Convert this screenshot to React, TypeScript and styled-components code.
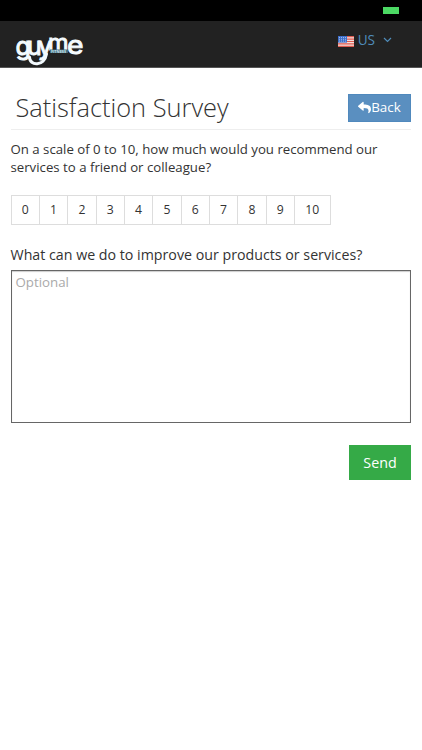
import React from 'react';
import styled, { createGlobalStyle } from 'styled-components';
import { FaReply } from 'react-icons/fa';

const GlobalStyle = createGlobalStyle`
	* {
		box-sizing: border-box;
	}
	body {
		margin: 0;
		background: #fff;
		color: #333;
		font-family: 'Open Sans', sans-serif;
	}
	button,
	textarea {
		font-family: inherit;
	}
`;

const StatusBar = styled.div`
	display: flex;
	justify-content: flex-end;
	height: 21px;
	padding: 7px 23px 0 0;
	background: #000;
`;

const Battery = styled.div`
	width: 16px;
	height: 7px;
	background: #4cd964;
`;

const Navbar = styled.header`
	display: flex;
	justify-content: space-between;
	height: 47px;
	padding: 0 30px 0 14px;
	background: #222;
	border-bottom: 1px solid #555;
`;

const LogoSvg = styled.svg`
	display: block;
	margin-top: 11px;
	overflow: visible;
`;

const LanguageMenu = styled.button`
	display: flex;
	align-items: center;
	height: 20px;
	margin-top: 9px;
	padding: 0;
	border: 0;
	background: none;
	color: #4f8cba;
	font-size: 13.6px;
	line-height: 20px;
`;

const FlagSvg = styled.svg`
	margin: 3px 4px 0 0;
`;

const ChevronSvg = styled.svg`
	margin-left: 8px;
`;

const Page = styled.main`
	padding: 26px 11px 0 10.5px;
`;

const TitleRow = styled.div`
	display: flex;
	justify-content: space-between;
	height: 36px;
	padding-left: 5px;
	border-bottom: 1px solid #eee;
`;

const Title = styled.h1`
	margin: -5px 0 0;
	font-size: 25.4px;
	font-weight: 300;
	line-height: 36px;
	white-space: nowrap;
`;

const BackButton = styled.button`
	display: flex;
	align-items: center;
	justify-content: center;
	width: 63px;
	height: 28px;
	padding: 0 0 2px;
	border: 1px solid #5089bd;
	background: #5a8fc0;
	color: #fff;
	font-size: 13.4px;
`;

const Question = styled.p`
	margin: 10px 0 0;
	font-size: 13.23px;
	line-height: 18.4px;
`;

const Scale = styled.div`
	display: flex;
	width: 320px;
	height: 30px;
	margin-top: 18.2px;
	border: 1px solid #ddd;
`;

const ScaleOption = styled.button<{ $wide?: boolean }>`
	flex: ${({ $wide }) => ($wide ? '1 0 0' : '0 0 28.35px')};
	padding: 0 0 2px;
	border: 0;
	border-right: ${({ $wide }) => ($wide ? '0' : '1px solid #ddd')};
	background: #fff;
	color: #333;
	font-size: 12.2px;
`;

const Label = styled.label`
	display: block;
	margin-top: 20px;
	font-size: 14.23px;
	line-height: 20px;
`;

const Comments = styled.textarea`
	display: block;
	width: 100%;
	height: 153px;
	margin-top: 5px;
	padding: 1px 4px;
	border: 1px solid #666;
	border-radius: 0;
	box-shadow: inset 0 1px 1px rgba(0, 0, 0, 0.2);
	font-size: 13.3px;
	line-height: 20px;
	resize: none;
	&::placeholder {
		color: #aaa;
	}
`;

const Actions = styled.div`
	display: flex;
	justify-content: flex-end;
	margin-top: 22px;
`;

const SendButton = styled.button`
	width: 62px;
	height: 35px;
	padding: 0;
	border: 0;
	background: #35aa47;
	color: #fff;
	font-size: 14.3px;
`;

const scores = Array.from({ length: 11 }, (_, i) => i);

const Logo = () => (
	<LogoSvg width='72' height='36' viewBox='14 32 72 36'>
		<g fill='#f4fbff' stroke='#f4fbff' strokeWidth='0.9' fontFamily='Inter, sans-serif' fontWeight='400'>
			<text x='15.5' y='54.5' fontSize='25' letterSpacing='-3.8'>guy</text>
			<text x='48' y='49.5' fontSize='22' textLength='20.5' lengthAdjust='spacingAndGlyphs'>m</text>
			<text x='67' y='53.5' fontSize='25' textLength='16.5' lengthAdjust='spacingAndGlyphs'>e</text>
		</g>
		<path d='M29.5 57c0 9.5 15 9.5 17-3' fill='none' stroke='#f4fbff' strokeWidth='3' strokeLinecap='round' />
		<rect x='50' y='49.5' width='18' height='3.5' fill='#426b7d' />
		<text x='51' y='52.6' fill='#d0e8f0' fontFamily='Open Sans, sans-serif' fontWeight='700' fontSize='3.8' textLength='15'>FITNESS</text>
	</LogoSvg>
);

const Flag = () => (
	<FlagSvg width='16' height='11' viewBox='0 0 16 11'>
		<rect width='16' height='11' fill='#f4dedb' />
		<path d='M0 .7h16M0 3.1h16M0 5.5h16M0 7.9h16M0 10.3h16' stroke='#df5b50' strokeWidth='1.2' />
		<rect width='9' height='6.6' fill='#3e6fca' />
		<path d='M1 1.5h7M1 3.3h7M1 5.1h7' stroke='#b8cdf4' strokeWidth='.8' strokeDasharray='1 1' />
	</FlagSvg>
);

const App: React.FC = () => {
	return (
		<>
			<GlobalStyle />
			<StatusBar>
				<Battery />
			</StatusBar>
			<Navbar>
				<Logo />
				<LanguageMenu>
					<Flag />
					US
					<ChevronSvg width='9' height='6' viewBox='0 0 9 6'>
						<path d='M1 1l3.5 3.5L8 1' fill='none' stroke='currentColor' strokeWidth='1.2' />
					</ChevronSvg>
				</LanguageMenu>
			</Navbar>
			<Page>
				<TitleRow>
					<Title>Satisfaction Survey</Title>
					<BackButton>
						<FaReply size={13} />
						Back
					</BackButton>
				</TitleRow>
				<Question>On a scale of 0 to 10, how much would you recommend our services to a friend or colleague?</Question>
				<Scale>
					{scores.map((score) => (
						<ScaleOption
							key={score}
							$wide={score === 10}
						>
							{score}
						</ScaleOption>
					))}
				</Scale>
				<Label htmlFor='comments'>What can we do to improve our products or services?</Label>
				<Comments
					id='comments'
					placeholder='Optional'
				/>
				<Actions>
					<SendButton>Send</SendButton>
				</Actions>
			</Page>
		</>
	);
};

export default App;
